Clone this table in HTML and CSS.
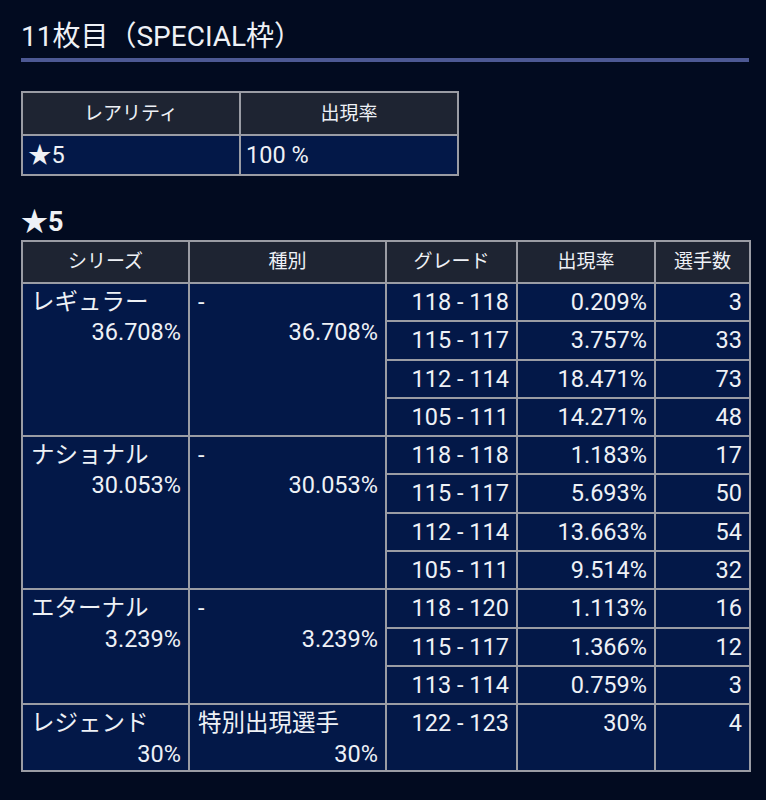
FILE: index.html
```html
<!DOCTYPE html>
<html lang="ja">
<head>
<meta charset="utf-8">
<title>11枚目（SPECIAL枠）</title>
<link rel="stylesheet" href="styles.css">
</head>
<body>
<div class="page">
  <h1 class="title">11枚目（SPECIAL枠）</h1>

  <table class="rarity">
    <colgroup><col class="c-half"><col class="c-half"></colgroup>
    <thead>
      <tr><th>レアリティ</th><th>出現率</th></tr>
    </thead>
    <tbody>
      <tr><td>★5</td><td>100 %</td></tr>
    </tbody>
  </table>

  <h2 class="sub">★5</h2>

  <table class="detail">
    <colgroup>
      <col class="c1"><col class="c2"><col class="c3"><col class="c4"><col class="c5">
    </colgroup>
    <thead>
      <tr><th>シリーズ</th><th>種別</th><th>グレード</th><th>出現率</th><th>選手数</th></tr>
    </thead>
    <tbody>
      <tr>
        <td rowspan="4" class="group"><div>レギュラー</div><div class="pct">36.708%</div></td>
        <td rowspan="4" class="group"><div>-</div><div class="pct">36.708%</div></td>
        <td class="num">118 - 118</td><td class="num">0.209%</td><td class="num">3</td>
      </tr>
      <tr><td class="num">115 - 117</td><td class="num">3.757%</td><td class="num">33</td></tr>
      <tr><td class="num">112 - 114</td><td class="num">18.471%</td><td class="num">73</td></tr>
      <tr><td class="num">105 - 111</td><td class="num">14.271%</td><td class="num">48</td></tr>

      <tr>
        <td rowspan="4" class="group"><div>ナショナル</div><div class="pct">30.053%</div></td>
        <td rowspan="4" class="group"><div>-</div><div class="pct">30.053%</div></td>
        <td class="num">118 - 118</td><td class="num">1.183%</td><td class="num">17</td>
      </tr>
      <tr><td class="num">115 - 117</td><td class="num">5.693%</td><td class="num">50</td></tr>
      <tr><td class="num">112 - 114</td><td class="num">13.663%</td><td class="num">54</td></tr>
      <tr><td class="num">105 - 111</td><td class="num">9.514%</td><td class="num">32</td></tr>

      <tr>
        <td rowspan="3" class="group"><div>エターナル</div><div class="pct">3.239%</div></td>
        <td rowspan="3" class="group"><div>-</div><div class="pct">3.239%</div></td>
        <td class="num">118 - 120</td><td class="num">1.113%</td><td class="num">16</td>
      </tr>
      <tr><td class="num">115 - 117</td><td class="num">1.366%</td><td class="num">12</td></tr>
      <tr><td class="num">113 - 114</td><td class="num">0.759%</td><td class="num">3</td></tr>

      <tr class="last">
        <td class="group"><div>レジェンド</div><div class="pct">30%</div></td>
        <td class="group"><div>特別出現選手</div><div class="pct">30%</div></td>
        <td class="num top">122 - 123</td><td class="num top">30%</td><td class="num top">4</td>
      </tr>
    </tbody>
  </table>
</div>
</body>
</html>
```

FILE: styles.css
```css
html, body {
  margin: 0;
  padding: 0;
  background: #020b20;
}

body {
  color: #eef1f6;
  font-family: Roboto, "Noto Sans CJK JP", sans-serif;
}

.page {
  width: 728px;
  padding: 20px 17px 28px 21px;
}

.title {
  margin: 0;
  font-size: 28px;
  font-weight: 400;
  line-height: 34px;
  padding-bottom: 4px;
  border-bottom: 4px solid #4d5994;
}

table {
  border-collapse: collapse;
  table-layout: fixed;
}

th, td {
  border: 2px solid #9a9ca4;
}

th {
  background: #1e2432;
  font-weight: 400;
  text-align: center;
}

td {
  background: #031848;
}

.rarity {
  margin-top: 29px;
  width: 436px;
}

.rarity th {
  font-size: 19px;
  line-height: 31px;
  padding: 5px 8px;
}

.rarity td {
  font-size: 23.5px;
  line-height: 32px;
  padding: 3px 5px;
  text-align: left;
}

.c-half { width: 218px; }

.sub {
  margin: 30px 0 2px;
  font-size: 27px;
  font-weight: 700;
  line-height: 32px;
}

.detail {
  width: 728px;
  font-size: 23.5px;
}

.c1 { width: 167px; }
.c2 { width: 197px; }
.c3 { width: 131px; }
.c4 { width: 138px; }
.c5 { width: 95px; }

.detail th {
  font-size: 19px;
  line-height: 30px;
  padding: 5px 7px;
}

.detail td {
  line-height: 30.3px;
  padding: 3px 7px;
}

.detail td.group {
  vertical-align: top;
  text-align: left;
  padding-left: 8px;
}

.detail td .pct {
  text-align: right;
}

.detail td.num {
  text-align: right;
}

.detail td.top {
  vertical-align: top;
}

.detail tr.last td {
  padding-bottom: 1px;
}
```
